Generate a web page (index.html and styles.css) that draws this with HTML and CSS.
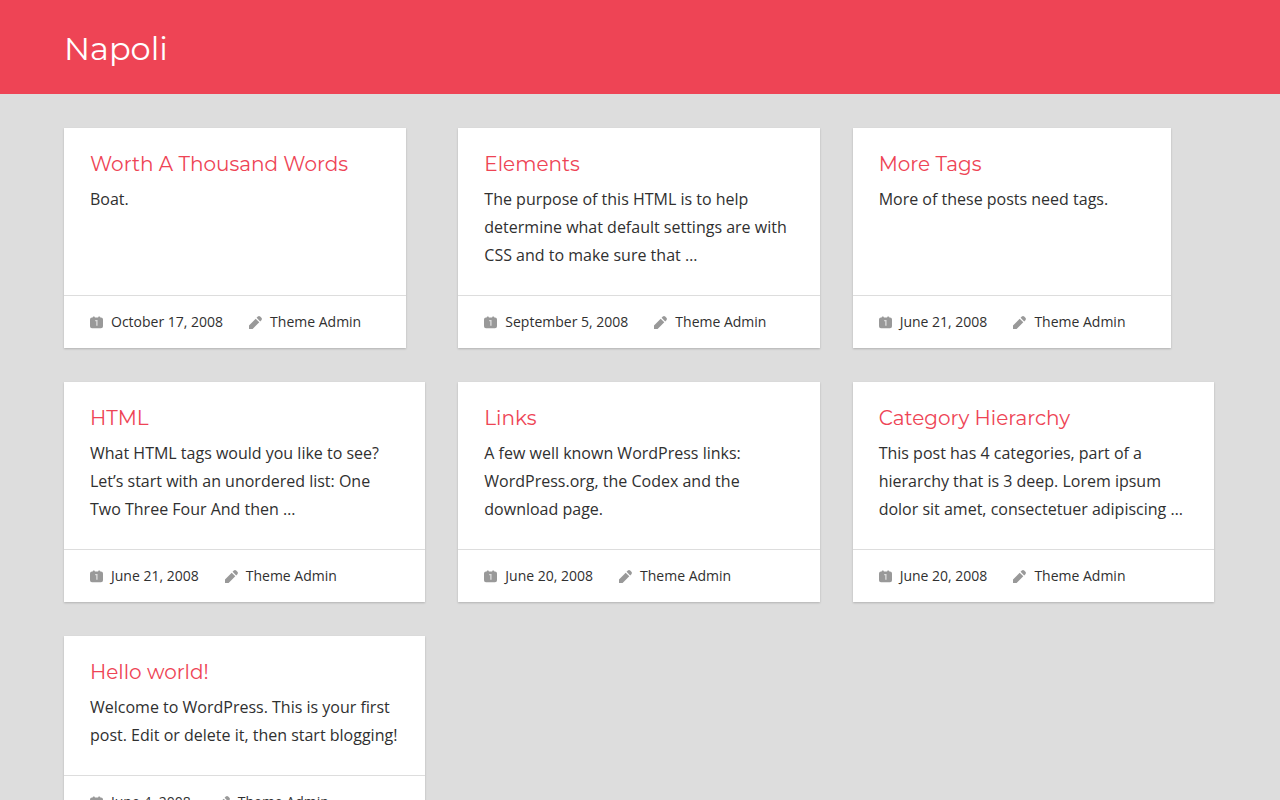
FILE: index.html
```
<!DOCTYPE html>
<html lang="en">
<head>
    <meta charset="UTF-8">
    <meta name="viewport" content="width=device-width, initial-scale=1.0">
    <title>Napoli</title>
    <link rel="stylesheet" href="styles.css">
</head>
<body>
    <!-- Icons shared by all posts -->
    <svg class="icon-sprite" aria-hidden="true">
        <symbol id="icon-date" viewBox="0 0 13 13">
            <path fill="currentColor" d="M2 1.5h.8V1q0-.6.6-.6h.8q.6 0 .6.6v.5h3.4V1q0-.6.6-.6h.8q.6 0 .6.6v.5h.8q2 0 2 2v6.7q0 2-2 2H2q-2 0-2-2V3.5q0-2 2-2z"/>
            <path fill="none" stroke="#ddd" stroke-width="1.3" d="M5.2 4.6h1.7V9.8"/>
        </symbol>
        <symbol id="icon-author" viewBox="0 0 13 13">
            <path fill="currentColor" d="M0 13V9.4L6.7 2.7l3.6 3.6L3.6 13zM7.6 1.8L8.8.6q1.2-1 2.4 0l1.2 1.2q1 1.2 0 2.4l-1.2 1.2z"/>
        </symbol>
    </svg>

    <header class="site-header">
        <p class="site-title"><a href="#">Napoli</a></p>
    </header>

    <main class="post-grid">
        <article class="post">
            <div class="post-content">
                <h2 class="post-title"><a href="#">Worth A Thousand Words</a></h2>
                <p>Boat.</p>
            </div>
            <footer class="post-meta">
                <a href="#"><svg class="icon"><use href="#icon-date"/></svg><time datetime="2008-10-17">October 17, 2008</time></a>
                <a href="#"><svg class="icon"><use href="#icon-author"/></svg>Theme Admin</a>
            </footer>
        </article>

        <article class="post">
            <div class="post-content">
                <h2 class="post-title"><a href="#">Elements</a></h2>
                <p>The purpose of this HTML is to help determine what default settings are with CSS and to make sure that …</p>
            </div>
            <footer class="post-meta">
                <a href="#"><svg class="icon"><use href="#icon-date"/></svg><time datetime="2008-09-05">September 5, 2008</time></a>
                <a href="#"><svg class="icon"><use href="#icon-author"/></svg>Theme Admin</a>
            </footer>
        </article>

        <article class="post">
            <div class="post-content">
                <h2 class="post-title"><a href="#">More Tags</a></h2>
                <p>More of these posts need tags.</p>
            </div>
            <footer class="post-meta">
                <a href="#"><svg class="icon"><use href="#icon-date"/></svg><time datetime="2008-06-21">June 21, 2008</time></a>
                <a href="#"><svg class="icon"><use href="#icon-author"/></svg>Theme Admin</a>
            </footer>
        </article>

        <article class="post">
            <div class="post-content">
                <h2 class="post-title"><a href="#">HTML</a></h2>
                <p>What HTML tags would you like to see? Let’s start with an unordered list: One Two Three Four And then …</p>
            </div>
            <footer class="post-meta">
                <a href="#"><svg class="icon"><use href="#icon-date"/></svg><time datetime="2008-06-21">June 21, 2008</time></a>
                <a href="#"><svg class="icon"><use href="#icon-author"/></svg>Theme Admin</a>
            </footer>
        </article>

        <article class="post">
            <div class="post-content">
                <h2 class="post-title"><a href="#">Links</a></h2>
                <p>A few well known WordPress links: WordPress.org, the Codex and the download page.</p>
            </div>
            <footer class="post-meta">
                <a href="#"><svg class="icon"><use href="#icon-date"/></svg><time datetime="2008-06-20">June 20, 2008</time></a>
                <a href="#"><svg class="icon"><use href="#icon-author"/></svg>Theme Admin</a>
            </footer>
        </article>

        <article class="post">
            <div class="post-content">
                <h2 class="post-title"><a href="#">Category Hierarchy</a></h2>
                <p>This post has 4 categories, part of a hierarchy that is 3 deep. Lorem ipsum dolor sit amet, consectetuer adipiscing …</p>
            </div>
            <footer class="post-meta">
                <a href="#"><svg class="icon"><use href="#icon-date"/></svg><time datetime="2008-06-20">June 20, 2008</time></a>
                <a href="#"><svg class="icon"><use href="#icon-author"/></svg>Theme Admin</a>
            </footer>
        </article>

        <article class="post">
            <div class="post-content">
                <h2 class="post-title"><a href="#">Hello world!</a></h2>
                <p>Welcome to WordPress. This is your first post. Edit or delete it, then start blogging!</p>
            </div>
            <footer class="post-meta">
                <a href="#"><svg class="icon"><use href="#icon-date"/></svg><time datetime="2008-06-04">June 4, 2008</time></a>
                <a href="#"><svg class="icon"><use href="#icon-author"/></svg>Theme Admin</a>
            </footer>
        </article>
    </main>
</body>
</html>
```
FILE: styles.css
```
* {
    box-sizing: border-box;
}

body {
    margin: 0;
    background: #ddd;
    color: #303030;
    font-family: "Open Sans", "Noto Sans", sans-serif;
    font-size: 16px;
    line-height: 28px;
}

a {
    color: inherit;
    text-decoration: none;
}

.icon-sprite {
    display: none;
}

/* Header */
.site-header {
    padding: 27px 64px 23px;
    background: #ee4455;
}

.site-title {
    margin: 0;
    color: #fff;
    font-family: Montserrat, Inter, sans-serif;
    font-size: 32px;
    font-weight: 400;
    line-height: 44px;
}

/* Posts */
.post-grid {
    display: grid;
    grid-template-columns: repeat(3, 1fr);
    gap: 34px 33px;
    padding: 34px 66px 34px 64px;
}

.post {
    display: flex;
    flex-direction: column;
    justify-self: start; /* short posts are only as wide as their content */
    background: #fff;
    box-shadow: 0 1px 2px rgba(0, 0, 0, 0.2);
}

.post-content {
    flex: 1;
    padding: 22px 26px 26px;
}

.post-content p {
    margin: 0;
}

.post-title {
    margin: 0 0 7px;
    color: #ee4455;
    font-family: Montserrat, Inter, sans-serif;
    font-size: 20px;
    font-weight: 400;
    line-height: 28px;
}

.post-meta {
    display: flex;
    gap: 26px;
    padding: 14px 45px 14px 26px;
    border-top: 1px solid #ddd;
    font-size: 14px;
    line-height: 24px;
    white-space: nowrap;
}

.post-meta a {
    display: flex;
    align-items: center;
    gap: 8px;
}

.icon {
    width: 13px;
    height: 13px;
    color: #999;
}

@media (max-width: 960px) {
    .post-grid {
        grid-template-columns: repeat(2, 1fr);
    }
}

@media (max-width: 640px) {
    .post-grid {
        grid-template-columns: 1fr;
    }
}
```
